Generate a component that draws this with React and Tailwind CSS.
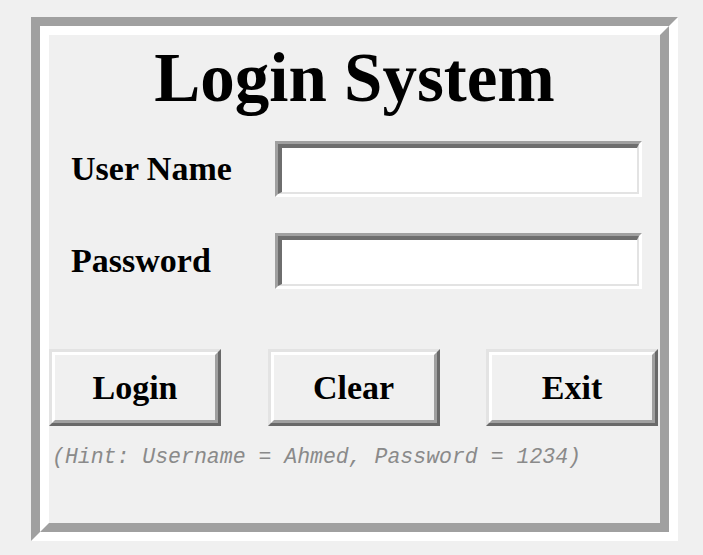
import React, { useState } from "react";

const serif = { fontFamily: '"Liberation Serif", "Times New Roman", serif' };
const mono = { fontFamily: '"Liberation Mono", "Courier New", monospace' };

function Field({ label, type = "text", value, onChange }) {
  return (
    <div className="flex items-center h-[56px]">
      <label className="w-[226px] pl-[22px] text-[34px] font-bold leading-none text-black" style={serif}>
        {label}
      </label>
      <div className="w-[367px] h-full border-[3px] border-t-[#a0a0a0] border-l-[#a0a0a0] border-b-white border-r-white">
        <div className="h-full border-t-[4px] border-l-[4px] border-b-[2px] border-r-[2px] border-t-[#6e6e6e] border-l-[#6e6e6e] border-b-[#e3e3e3] border-r-[#e3e3e3] bg-white">
          <input
            type={type}
            value={value}
            onChange={(e) => onChange(e.target.value)}
            className="w-full h-full bg-white px-1 text-[24px] outline-none"
            style={serif}
          />
        </div>
      </div>
    </div>
  );
}

function TkButton({ children, onClick }) {
  return (
    <button
      type="button"
      onClick={onClick}
      className="w-[172px] h-[77px] border-[3px] border-t-[#e3e3e3] border-l-[#e3e3e3] border-b-[#696969] border-r-[#696969] bg-[#f0f0f0] p-0"
    >
      <div
        className="h-full flex items-center justify-center border-[3px] border-t-white border-l-white border-b-[#a0a0a0] border-r-[#a0a0a0] text-[34px] font-bold leading-none text-black"
        style={serif}
      >
        {children}
      </div>
    </button>
  );
}

export default function App() {
  const [user, setUser] = useState("");
  const [pass, setPass] = useState("");

  const clear = () => {
    setUser("");
    setPass("");
  };

  return (
    <div className="w-[703px] h-[555px] bg-[#f0f0f0] pt-[17px] pl-[31px]">
      <div className="w-[647px] h-[524px] border-[9px] border-t-[#a0a0a0] border-l-[#a0a0a0] border-b-white border-r-white">
        <div className="h-full border-[9px] border-t-white border-l-white border-b-[#a0a0a0] border-r-[#a0a0a0] bg-[#f0f0f0]">
          <h1 className="pt-[9px] text-center text-[69px] font-bold leading-none text-black" style={serif}>
            Login System
          </h1>

          <div className="mt-[28px] flex flex-col gap-[36px]">
            <Field label="User Name" value={user} onChange={setUser} />
            <Field label="Password" type="password" value={pass} onChange={setPass} />
          </div>

          <div className="mt-[60px] flex justify-between pr-[2px]">
            <TkButton>Login</TkButton>
            <TkButton onClick={clear}>Clear</TkButton>
            <TkButton>Exit</TkButton>
          </div>

          <p className="mt-[19px] pl-[3px] text-[21.5px] italic leading-[24px] text-[#8a8a8a] whitespace-nowrap" style={mono}>
            (Hint: Username = Ahmed, Password = 1234)
          </p>
        </div>
      </div>
    </div>
  );
}
